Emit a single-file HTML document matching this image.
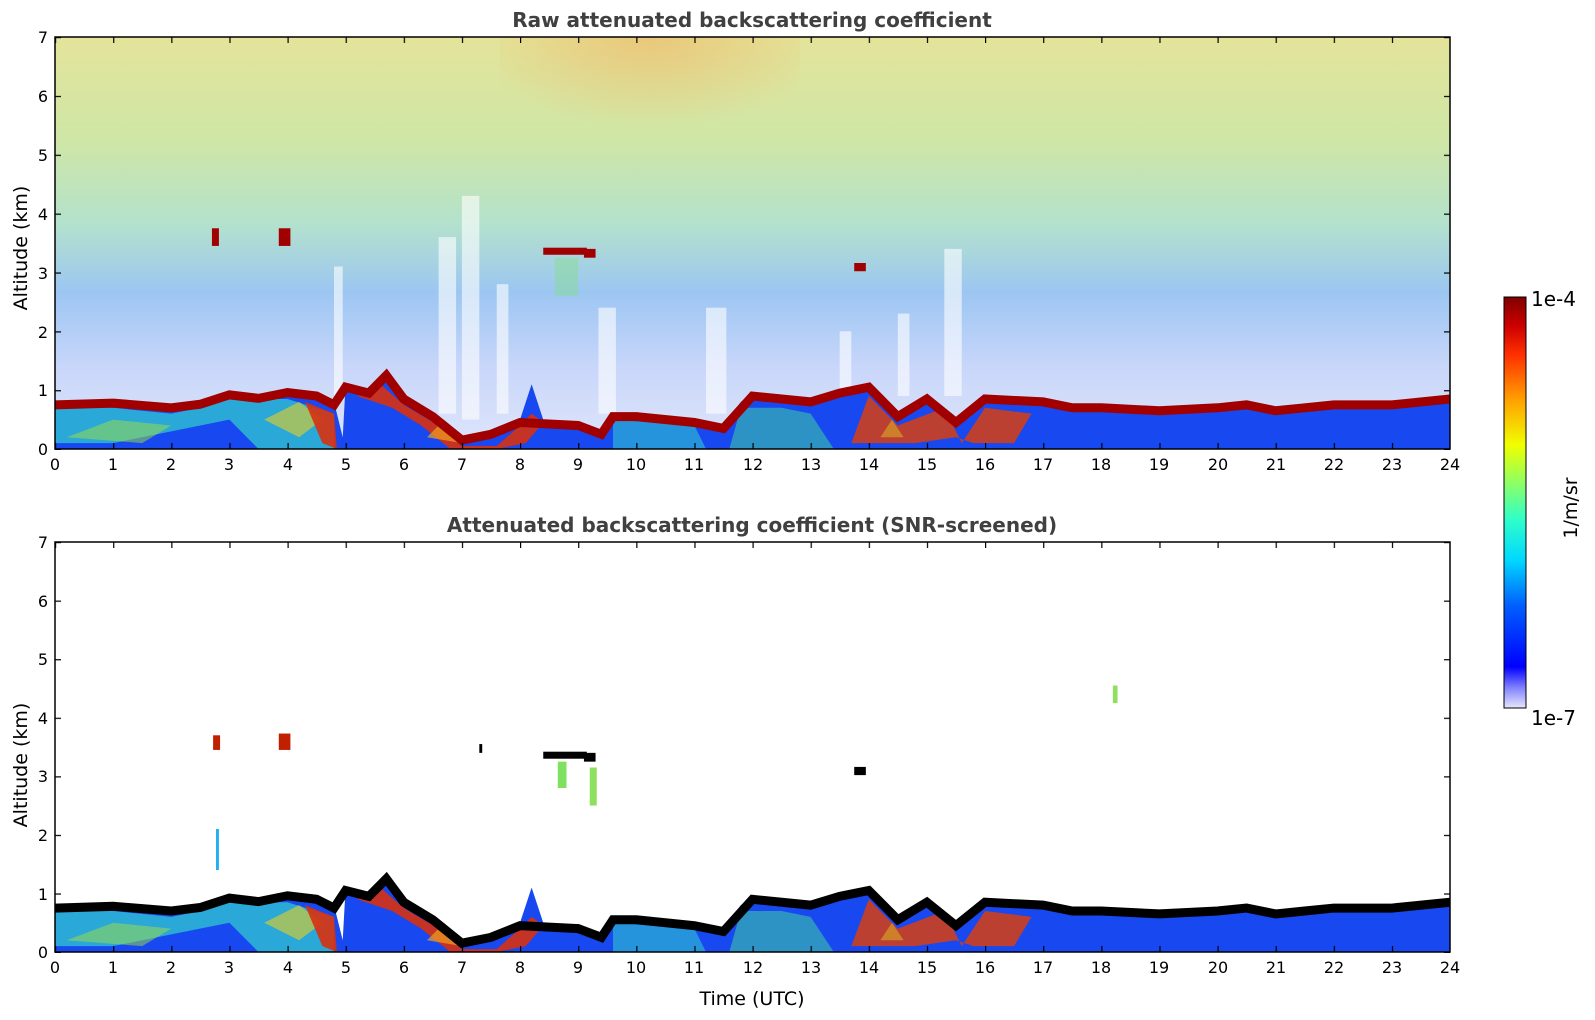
<!DOCTYPE html>
<html><head><meta charset="utf-8"><style>
html,body{margin:0;padding:0;background:#fff;}
svg{display:block;font-family:"DejaVu Sans","Liberation Sans",sans-serif;}
</style></head><body>
<svg width="1595" height="1020" xmlns="http://www.w3.org/2000/svg">
<defs>
<linearGradient id="bg" x1="0" y1="0" x2="0" y2="1">
<stop offset="0" stop-color="#e4e49a"/>
<stop offset="0.25" stop-color="#cfe6a6"/>
<stop offset="0.45" stop-color="#b4e2cc"/>
<stop offset="0.62" stop-color="#9cc6f2"/>
<stop offset="0.8" stop-color="#c8d6fa"/>
<stop offset="1" stop-color="#dfe6fb"/>
</linearGradient>
<radialGradient id="hot" cx="0.5" cy="0" r="0.6">
<stop offset="0" stop-color="#f0b060" stop-opacity="0.55"/>
<stop offset="1" stop-color="#f0b060" stop-opacity="0"/>
</radialGradient>
<linearGradient id="cb" x1="0" y1="1" x2="0" y2="0">
<stop offset="0" stop-color="#e6e6fa"/>
<stop offset="0.05" stop-color="#8080ff"/>
<stop offset="0.1" stop-color="#0000ff"/>
<stop offset="0.25" stop-color="#0060ff"/>
<stop offset="0.36" stop-color="#00d8ff"/>
<stop offset="0.46" stop-color="#30ffc8"/>
<stop offset="0.58" stop-color="#b0ff40"/>
<stop offset="0.64" stop-color="#f0ff00"/>
<stop offset="0.75" stop-color="#ffa000"/>
<stop offset="0.86" stop-color="#ff3000"/>
<stop offset="0.93" stop-color="#cc0000"/>
<stop offset="1" stop-color="#800000"/>
</linearGradient>
<pattern id="xt" patternUnits="userSpaceOnUse" x="55" y="0" width="58.125" height="10"><rect x="0" y="0" width="1.2" height="10" fill="#000"/></pattern>
<pattern id="yt1" patternUnits="userSpaceOnUse" x="0" y="37" width="10" height="58.86"><rect x="0" y="0" width="10" height="1.2" fill="#000"/></pattern>
<pattern id="yt2" patternUnits="userSpaceOnUse" x="0" y="542" width="10" height="58.57"><rect x="0" y="0" width="10" height="1.2" fill="#000"/></pattern>
<g id="bl">
 <polygon fill="#1848f0" points="0,0 0,0.8 1,0.82 2,0.75 2.5,0.8 3,0.95 3.5,0.9 4,1.0 4.5,0.95 4.8,0.8 4.95,0.2 5,1.1 5.4,1.0 5.7,1.3 6,0.9 6.5,0.6 7,0.2 7.5,0.3 8,0.5 8.2,1.1 8.4,0.5 9,0.45 9.4,0.3 9.6,0.6 10,0.6 11,0.5 11.5,0.4 11.8,0.8 12,0.95 13,0.85 13.5,1.0 14,1.1 14.5,0.6 15,0.9 15.5,0.5 16,0.9 17,0.85 17.5,0.75 18,0.75 19,0.7 20,0.75 20.5,0.8 21,0.7 21.5,0.75 22,0.8 23,0.8 24,0.9 24,0"/>
 <polygon fill="#30c8d0" opacity="0.75" points="0,0.1 0,0.7 1,0.7 2,0.6 2.5,0.7 3,0.85 4,0.85 4.8,0.6 4.8,0 3.5,0 3,0.5 2,0.3 1,0.1"/>
 <polygon fill="#a0e040" opacity="0.5" points="0.2,0.2 1,0.5 2,0.4 1.5,0.1"/>
 <polygon fill="#e8d020" opacity="0.6" points="3.6,0.5 4.2,0.8 4.6,0.5 4.2,0.2"/>
 <polygon fill="#d83010" opacity="0.9" points="4.3,0.8 4.8,0.6 4.85,0 4.6,0.1"/>
 <polygon fill="#d83010" opacity="0.9" points="5.6,1.1 6,0.75 6.6,0.4 7,0.05 7.6,0.05 8,0.4 8.2,0.6 8.4,0.45 8.1,0.1 7.6,0 6.8,0 6.3,0.4 5.8,0.7 5.2,0.9"/>
 <polygon fill="#f0a020" opacity="0.7" points="6.4,0.2 6.7,0.5 7.0,0.1"/>
 <polygon fill="#30c8d0" opacity="0.6" points="9.6,0 9.6,0.5 11,0.4 11.2,0 "/>
 <polygon fill="#40d0a0" opacity="0.55" points="11.6,0 11.8,0.7 12.5,0.7 13,0.6 13.4,0 "/>
 <polygon fill="#d84010" opacity="0.85" points="13.7,0.1 14,0.9 14.5,0.4 15.3,0.7 15.6,0.1 16,0.7 16.8,0.6 16.5,0.1 15.8,0.1 15.5,0.2 14.8,0.1"/>
 <polygon fill="#e0c020" opacity="0.5" points="14.2,0.2 14.4,0.5 14.6,0.2"/>
</g>
<polyline id="bline" fill="none" stroke-width="9" vector-effect="non-scaling-stroke" points="0,0.75 1,0.78 2,0.7 2.5,0.76 3,0.92 3.5,0.86 4,0.96 4.5,0.9 4.8,0.75 5,1.05 5.4,0.95 5.7,1.25 6,0.85 6.5,0.55 7,0.15 7.5,0.25 8,0.45 9,0.4 9.4,0.25 9.6,0.55 10,0.55 11,0.45 11.5,0.35 12,0.9 13,0.8 13.5,0.95 14,1.05 14.5,0.55 15,0.85 15.5,0.45 16,0.85 17,0.8 17.5,0.7 18,0.7 19,0.65 20,0.7 20.5,0.75 21,0.65 21.5,0.7 22,0.75 23,0.75 24,0.85"/>
</defs>

<!-- TOP PANEL -->
<rect x="55" y="37" width="1395" height="412" fill="url(#bg)"/>
<rect x="500" y="37" width="300" height="150" fill="url(#hot)"/>
<g transform="translate(55,449) scale(58.125,-58.86)">
 <g fill="#fff" opacity="0.6">
  <rect x="4.8" y="0.9" width="0.15" height="2.2"/>
  <rect x="6.6" y="0.6" width="0.3" height="3.0"/>
  <rect x="7.0" y="0.5" width="0.3" height="3.8"/>
  <rect x="7.6" y="0.6" width="0.2" height="2.2"/>
  <rect x="9.35" y="0.6" width="0.3" height="1.8"/>
  <rect x="11.2" y="0.6" width="0.35" height="1.8"/>
  <rect x="15.3" y="0.9" width="0.3" height="2.5"/>
  <rect x="14.5" y="0.9" width="0.2" height="1.4"/>
  <rect x="13.5" y="1.0" width="0.2" height="1.0"/>
 </g>
 <use href="#bl"/>
 <use href="#bline" stroke="#a00000"/>
 <g fill="#a00000">
  <rect x="8.4" y="3.3" width="0.75" height="0.12"/>
  <rect x="9.1" y="3.25" width="0.2" height="0.15"/>
  <rect x="2.7" y="3.45" width="0.12" height="0.3"/>
  <rect x="3.85" y="3.45" width="0.2" height="0.3"/>
  <rect x="13.75" y="3.02" width="0.2" height="0.14"/>
 </g>
 <rect x="8.6" y="2.6" width="0.4" height="0.65" fill="#80e080" opacity="0.4"/>
</g>
<rect x="55" y="37" width="1395" height="412" fill="none" stroke="#000" stroke-width="1.5"/>
<rect x="55" y="443" width="1395" height="6" fill="url(#xt)"/>
<rect x="55" y="37" width="1395" height="6" fill="url(#xt)"/>
<rect x="55" y="37" width="6" height="413" fill="url(#yt1)"/>
<rect x="1444" y="37" width="6" height="413" fill="url(#yt1)"/>

<!-- BOTTOM PANEL -->
<g transform="translate(55,952) scale(58.125,-58.57)">
 <use href="#bl"/>
 <rect x="6.3" y="0.7" width="1.0" height="1.2" fill="#fff"/>
 <use href="#bline" stroke="#000" stroke-width="7"/>
 <g fill="#000">
  <rect x="8.4" y="3.3" width="0.75" height="0.12"/>
  <rect x="9.1" y="3.25" width="0.2" height="0.15"/>
  <rect x="13.75" y="3.02" width="0.2" height="0.14"/>
  <rect x="7.3" y="3.4" width="0.05" height="0.15"/>
 </g>
 <g fill="#c02000">
  <rect x="2.72" y="3.45" width="0.12" height="0.25"/>
  <rect x="3.85" y="3.45" width="0.2" height="0.28"/>
 </g>
 <rect x="8.65" y="2.8" width="0.15" height="0.45" fill="#80e060"/>
 <rect x="9.2" y="2.5" width="0.12" height="0.65" fill="#90e060"/>
 <rect x="18.2" y="4.25" width="0.08" height="0.3" fill="#90e060"/>
 <rect x="2.77" y="1.4" width="0.05" height="0.7" fill="#20b0f0"/>
</g>
<rect x="55" y="542" width="1395" height="410" fill="none" stroke="#000" stroke-width="1.5"/>
<rect x="55" y="946" width="1395" height="6" fill="url(#xt)"/>
<rect x="55" y="542" width="1395" height="6" fill="url(#xt)"/>
<rect x="55" y="542" width="6" height="411" fill="url(#yt2)"/>
<rect x="1444" y="542" width="6" height="411" fill="url(#yt2)"/>

<!-- colorbar -->
<rect x="1504" y="297" width="22" height="411" fill="url(#cb)" stroke="#000" stroke-width="1"/>
<g font-size="20" fill="#000">
<text x="1531" y="306">1e-4</text>
<text x="1531" y="725">1e-7</text>
<text transform="translate(1577,508) rotate(-90)" text-anchor="middle" font-size="19">1/m/sr</text>
</g>

<g font-weight="bold" font-size="20" fill="#404040" text-anchor="middle">
<text x="752" y="27">Raw attenuated backscattering coefficient</text>
<text x="752" y="532">Attenuated backscattering coefficient (SNR-screened)</text>
</g>
<g font-size="19" fill="#000" text-anchor="middle">
<text transform="translate(27,248) rotate(-90)">Altitude (km)</text>
<text transform="translate(27,765) rotate(-90)">Altitude (km)</text>
<text x="752" y="1005">Time (UTC)</text>
</g>

<g font-size="16" fill="#000" text-anchor="end">
<text x="48" y="43">7</text><text x="48" y="102">6</text><text x="48" y="161">5</text><text x="48" y="220">4</text><text x="48" y="279">3</text><text x="48" y="338">2</text><text x="48" y="396">1</text><text x="48" y="455">0</text>
<text x="48" y="548">7</text><text x="48" y="607">6</text><text x="48" y="665">5</text><text x="48" y="724">4</text><text x="48" y="782">3</text><text x="48" y="841">2</text><text x="48" y="900">1</text><text x="48" y="958">0</text>
</g>
<g font-size="16" fill="#000" text-anchor="middle">
<text y="470"><tspan x="55">0</tspan><tspan x="113">1</tspan><tspan x="171">2</tspan><tspan x="229">3</tspan><tspan x="288">4</tspan><tspan x="346">5</tspan><tspan x="404">6</tspan><tspan x="462">7</tspan><tspan x="520">8</tspan><tspan x="578">9</tspan><tspan x="636">10</tspan><tspan x="694">11</tspan><tspan x="753">12</tspan><tspan x="811">13</tspan><tspan x="869">14</tspan><tspan x="927">15</tspan><tspan x="985">16</tspan><tspan x="1043">17</tspan><tspan x="1101">18</tspan><tspan x="1159">19</tspan><tspan x="1218">20</tspan><tspan x="1276">21</tspan><tspan x="1334">22</tspan><tspan x="1392">23</tspan><tspan x="1450">24</tspan></text>
<text y="973"><tspan x="55">0</tspan><tspan x="113">1</tspan><tspan x="171">2</tspan><tspan x="229">3</tspan><tspan x="288">4</tspan><tspan x="346">5</tspan><tspan x="404">6</tspan><tspan x="462">7</tspan><tspan x="520">8</tspan><tspan x="578">9</tspan><tspan x="636">10</tspan><tspan x="694">11</tspan><tspan x="753">12</tspan><tspan x="811">13</tspan><tspan x="869">14</tspan><tspan x="927">15</tspan><tspan x="985">16</tspan><tspan x="1043">17</tspan><tspan x="1101">18</tspan><tspan x="1159">19</tspan><tspan x="1218">20</tspan><tspan x="1276">21</tspan><tspan x="1334">22</tspan><tspan x="1392">23</tspan><tspan x="1450">24</tspan></text>
</g>
</svg>
</body></html>
